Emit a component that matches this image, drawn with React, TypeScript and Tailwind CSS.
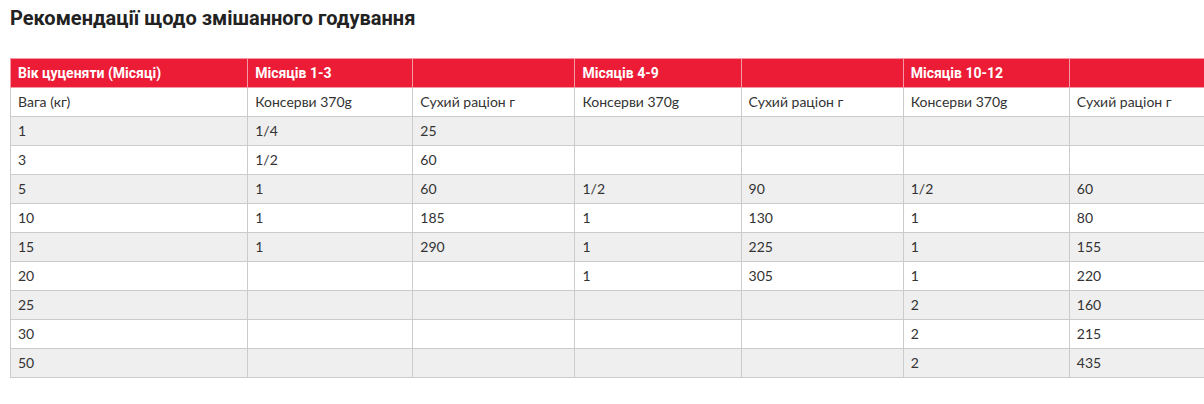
import React from "react";

const widths = [237, 165, 162, 166, 162, 166, 162];

const header = ["Вік цуценяти (Місяці)", "Місяців 1-3", "", "Місяців 4-9", "", "Місяців 10-12", ""];

const rows: string[][] = [
  ["Вага (кг)", "Консерви 370g", "Сухий раціон г", "Консерви 370g", "Сухий раціон г", "Консерви 370g", "Сухий раціон г"],
  ["1", "1/4", "25", "", "", "", ""],
  ["3", "1/2", "60", "", "", "", ""],
  ["5", "1", "60", "1/2", "90", "1/2", "60"],
  ["10", "1", "185", "1", "130", "1", "80"],
  ["15", "1", "290", "1", "225", "1", "155"],
  ["20", "", "", "1", "305", "1", "220"],
  ["25", "", "", "", "", "2", "160"],
  ["30", "", "", "", "", "2", "215"],
  ["50", "", "", "", "", "2", "435"],
];

export default function App() {
  return (
    <div className="w-[1204px] h-[404px] overflow-hidden bg-white">
      <div className="pl-[10px] pt-[5px]">
        <h2
          className="text-[20px] leading-[26px] font-bold text-[#222222]"
          style={{ fontFamily: "Roboto, 'Liberation Sans', sans-serif" }}
        >
          Рекомендації щодо змішанного годування
        </h2>
        <table
          className="mt-[27px] border-collapse table-fixed w-[1222px]"
          style={{ fontFamily: "Lato, 'Liberation Sans', sans-serif" }}
        >
          <colgroup>
            {widths.map((w, i) => (
              <col key={i} style={{ width: w }} />
            ))}
          </colgroup>
          <thead>
            <tr className="h-[29px] bg-[#ec1c37]">
              {header.map((h, i) => (
                <th
                  key={i}
                  className="border border-[#f29aa5] px-[7px] text-left align-middle text-[14px] font-bold text-white"
                  style={{ fontFamily: "Roboto, 'Liberation Sans', sans-serif" }}
                >
                  {h}
                </th>
              ))}
            </tr>
          </thead>
          <tbody>
            {rows.map((r, ri) => (
              <tr key={ri} className={`h-[29px] ${ri % 2 === 1 ? "bg-[#efefef]" : "bg-white"}`}>
                {r.map((c, ci) => (
                  <td
                    key={ci}
                    className="border border-[#cccccc] px-[7px] align-middle text-[14px] leading-[20px] text-[#333333]"
                  >
                    {c}
                  </td>
                ))}
              </tr>
            ))}
          </tbody>
        </table>
      </div>
    </div>
  );
}
